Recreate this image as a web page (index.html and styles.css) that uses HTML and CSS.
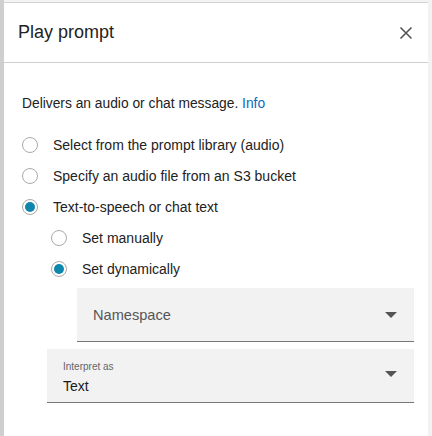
FILE: index.html
```html
<!DOCTYPE html>
<html>
<head>
<meta charset="utf-8">
<link rel="stylesheet" href="styles.css">
</head>
<body>
<div class="page">
  <div class="strip-left"></div>
  <div class="panel">
    <div class="header">
      <h1 class="title">Play prompt</h1>
      <svg class="close" width="14" height="14" viewBox="0 0 14 14"><path d="M1.5 1.5 L12.5 12.5 M12.5 1.5 L1.5 12.5" stroke="#555" stroke-width="1.6" fill="none"/></svg>
    </div>
    <div class="content">
      <p class="desc">Delivers an audio or chat message. <span class="info">Info</span></p>
      <div class="radios">
        <div class="row"><span class="radio"></span><span class="label">Select from the prompt library (audio)</span></div>
        <div class="row"><span class="radio"></span><span class="label">Specify an audio file from an S3 bucket</span></div>
        <div class="row"><span class="radio checked"></span><span class="label">Text-to-speech or chat text</span></div>
        <div class="nested">
          <div class="row"><span class="radio"></span><span class="label">Set manually</span></div>
          <div class="row"><span class="radio checked"></span><span class="label">Set dynamically</span></div>
          <div class="select ns">
            <span class="value muted">Namespace</span>
            <span class="caret"></span>
          </div>
        </div>
      </div>
      <div class="select interp">
        <div class="stack">
          <span class="small">Interpret as</span>
          <span class="value">Text</span>
        </div>
        <span class="caret"></span>
      </div>
    </div>
  </div>
  <div class="strip-right"></div>
</div>
</body>
</html>
```

FILE: styles.css
```css
html, body {
  margin: 0;
  padding: 0;
  background: #f4f4f4;
  font-family: "Liberation Sans", Arial, sans-serif;
  color: #222;
}
.page {
  display: flex;
  height: 436px;
  overflow: hidden;
}
.strip-left {
  width: 4px;
  background: #cfcfcf;
  flex: none;
}
.strip-right {
  width: 4px;
  background: #f2f2f2;
  flex: none;
}
.panel {
  flex: 1;
  margin-top: 2px;
  background: #fff;
  border-top: 1px solid #d3d3d3;
  display: flex;
  flex-direction: column;
}
.header {
  height: 59px;
  border-bottom: 1px solid #cfcfcf;
  display: flex;
  align-items: center;
  justify-content: space-between;
  padding: 0 15px 0 14px;
}
.title {
  margin: 0;
  font-size: 18px;
  font-weight: normal;
  color: #222;
}
.close {
  display: block;
}
.content {
  padding: 31px 14px 0 18px;
}
.desc {
  margin: 0 0 15px 0;
  font-size: 13.8px;
  line-height: 20px;
  color: #222;
}
.info {
  color: #0b6bbd;
}
.row {
  display: flex;
  align-items: center;
  height: 31px;
  font-size: 14px;
  color: #222;
}
.radio {
  width: 16px;
  height: 16px;
  box-sizing: border-box;
  border: 1px solid #aaa;
  border-radius: 50%;
  background: #fff;
  margin-right: 15px;
  flex: none;
  display: flex;
  align-items: center;
  justify-content: center;
}
.radio.checked::after {
  content: "";
  width: 10px;
  height: 10px;
  border-radius: 50%;
  background: #0f87ad;
}
.nested {
  padding-left: 29px;
}
.select {
  background: #f2f2f2;
  border-bottom: 1px solid #777;
  display: flex;
  align-items: center;
  justify-content: space-between;
  padding: 0 17px 0 16px;
  box-sizing: border-box;
}
.ns {
  height: 54px;
  margin-top: 4px;
  margin-left: 26px;
}
.interp {
  height: 54px;
  margin-top: 7px;
  margin-left: 25px;
}
.value {
  font-size: 14px;
  color: #1a1a1a;
}
.value.muted {
  font-size: 14.6px;
  color: #555;
}
.stack {
  display: flex;
  flex-direction: column;
  padding-top: 2px;
}
.small {
  font-size: 10px;
  color: #666;
  line-height: 13px;
  margin-bottom: 5px;
}
.interp .caret {
  margin-top: -3px;
}
.caret {
  width: 0;
  height: 0;
  border-left: 6px solid transparent;
  border-right: 6px solid transparent;
  border-top: 6px solid #555;
}
```
